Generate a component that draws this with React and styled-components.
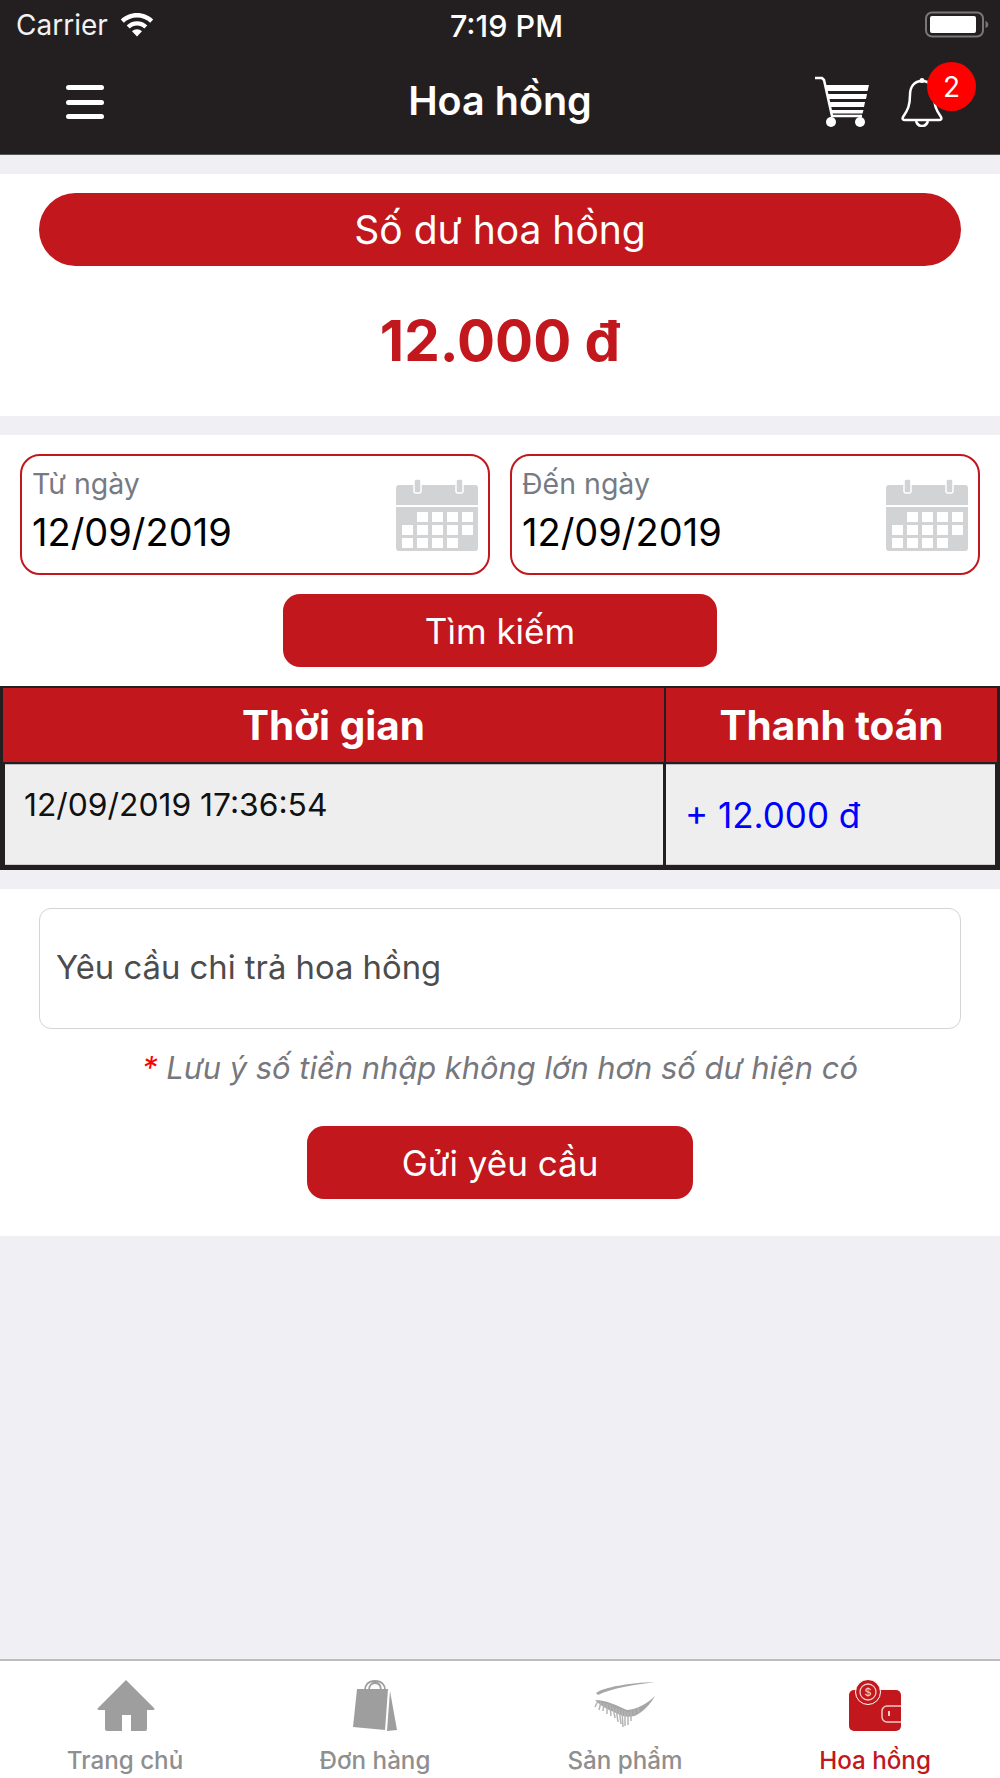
import styled, { createGlobalStyle } from "styled-components";

const RED = "#c1171d";
const DARK = "#231f20";
const PAGE = "#efeff4";

const Global = createGlobalStyle`
  * { box-sizing: border-box; }
  html, body { margin: 0; padding: 0; background: ${PAGE}; }
  body { font-family: Inter, "Noto Sans", "Liberation Sans", sans-serif; }
`;

const Screen = styled.div`
  width: 1000px;
  height: 1778px;
  display: flex;
  flex-direction: column;
  background: ${PAGE};
  overflow: hidden;
`;

const Header = styled.header`
  height: 155px;
  background: ${DARK};
  color: #fff;
  border-bottom: 1px solid #55555a;
`;

const StatusBar = styled.div`
  height: 50px;
  padding: 0 11px 0 16px;
  display: grid;
  grid-template-columns: 1fr auto 1fr;
  align-items: center;
`;

const Carrier = styled.div`
  display: flex;
  align-items: center;
  gap: 12px;
  font-size: 28px;
  color: #f2f2f2;
`;

const Clock = styled.div`
  font-size: 30.500px;
  font-weight: 500;
  margin-left: 8px;
`;

const Battery = styled.div`
  justify-self: end;
  display: flex;
`;

const NavBar = styled.nav`
  height: 104px;
  display: grid;
  grid-template-columns: 1fr auto 1fr;
  align-items: center;
  padding: 0 33px;
`;

const MenuSlot = styled.div`
  display: flex;
  padding-left: 33px;
`;

const Title = styled.h1`
  margin: 0;
  padding-bottom: 2px;
  font-size: 39.500px;
  font-weight: 600;
  text-align: center;
`;

const NavIcons = styled.div`
  justify-self: end;
  display: flex;
  align-items: center;
  gap: 32px;
`;

const BellWrap = styled.div`
  position: relative;
  width: 66px;
  height: 50px;
`;

const Badge = styled.span`
  position: absolute;
  top: -15px;
  right: -9px;
  width: 49px;
  height: 49px;
  border-radius: 50%;
  background: #fe0000;
  color: #fff;
  font-size: 28px;
  display: flex;
  align-items: center;
  justify-content: center;
`;

const Section = styled.section`
  background: #fff;
  margin-top: 19px;
`;

const BalanceSection = styled(Section)`
  height: 242px;
  padding: 19px 39px 0;
`;

const Pill = styled.div`
  height: 73px;
  border-radius: 37px;
  background: ${RED};
  color: #fff;
  font-size: 39px;
  display: flex;
  align-items: center;
  justify-content: center;
`;

const Amount = styled.div`
  margin-top: 40px;
  text-align: center;
  color: ${RED};
  font-size: 56.500px;
  line-height: 70px;
  font-weight: 700;
`;

const SearchSection = styled(Section)`
  padding-top: 19px;
`;

const DateRow = styled.div`
  display: grid;
  grid-template-columns: 1fr 1fr;
  gap: 20px;
  padding: 0 20px;
`;

const DateField = styled.div`
  height: 121px;
  border: 2px solid ${RED};
  border-radius: 20px;
  padding: 10px 10px 0 10px;
  display: flex;
  justify-content: space-between;
`;

const DateLabel = styled.div`
  color: #767a83;
  font-size: 28.500px;
  line-height: 36px;
`;

const DateValue = styled.div`
  margin-top: 8px;
  color: #000;
  font-size: 38px;
  line-height: 45px;
`;

const CalendarSlot = styled.div`
  padding-top: 13px;
`;

const ButtonRow = styled.div`
  display: flex;
  justify-content: center;
`;

const RedButton = styled.button`
  width: ${(p) => p.$w}px;
  height: 73px;
  margin-top: ${(p) => p.$top}px;
  border: none;
  border-radius: 17px;
  background: ${RED};
  color: #fff;
  font-family: inherit;
  font-size: 35px;
`;

const Table = styled.div`
  margin-top: 19px;
  background: ${DARK};
  padding: 2px 0 5px;
`;

const HeadRow = styled.div`
  display: grid;
  grid-template-columns: 661px 1fr;
  gap: 2px;
  padding: 0 3px;
  height: 74px;
`;

const HeadCell = styled.div`
  background: ${RED};
  color: #fff;
  font-size: 40.500px;
  font-weight: 700;
  display: flex;
  align-items: center;
  justify-content: center;
`;

const BodyRow = styled.div`
  display: grid;
  grid-template-columns: 658px 1fr;
  gap: 3px;
  padding: 0 5px;
  margin-top: 2px;
  height: 101px;
`;

const BodyCell = styled.div`
  background: #eee;
  border-top: 1px solid #bbb;
  border-bottom: 1px solid #ccc;
`;

const TimeCell = styled(BodyCell)`
  padding: 22px 0 0 19px;
  font-size: 31.800px;
  line-height: 36px;
  color: #111;
`;

const PayCell = styled(BodyCell)`
  padding: 29px 0 0 19px;
  font-size: 35px;
  line-height: 42px;
  color: #0000ff;
`;

const RequestSection = styled(Section)`
  height: 347px;
  padding: 19px 39px 0;
`;

const RequestInput = styled.div`
  height: 121px;
  border: 1px solid #d4d4d4;
  border-radius: 12px;
  padding: 0 16px 3px;
  display: flex;
  align-items: center;
  color: #4c4c4c;
  font-size: 32.800px;
`;

const Note = styled.div`
  margin-top: 21px;
  text-align: center;
  color: #77777c;
  font-size: 30.900px;
  line-height: 36px;
  font-style: italic;
  span {
    color: #f00;
  }
`;

const TabBar = styled.nav`
  margin-top: auto;
  height: 119px;
  background: #fff;
  border-top: 2px solid #bdbdbd;
  display: grid;
  grid-template-columns: repeat(4, 1fr);
`;

const Tab = styled.div`
  display: flex;
  flex-direction: column;
  align-items: center;
  padding-top: 19px;
  color: ${(p) => (p.$active ? RED : "#8f8f8f")};
  font-size: 24.200px;
  font-weight: 500;
  svg {
    display: block;
  }
`;

const TabLabel = styled.span`
  margin-top: 15px;
  line-height: 30px;
`;

const WifiIcon = () => (
  <svg width="34" height="24" viewBox="0 0 34 24">
    <path fill="#fff" d="M17 0C10.700 0 5 2.500.8 6.500l3 3.200C7.200 6.400 11.900 4.400 17 4.400s9.800 2 13.200 5.300l3-3.200C29 2.500 23.300 0 17 0z" />
    <path fill="#fff" d="M17 8.200c-4 0-7.600 1.600-10.300 4.200l3 3.100c1.900-1.800 4.500-3 7.300-3s5.400 1.200 7.300 3l3-3.100C24.600 9.800 21 8.200 17 8.200z" />
    <path fill="#fff" d="M17 16.300c-2 0-3.700.8-5 2l5 5.200 5-5.200c-1.300-1.200-3-2-5-2z" />
  </svg>
);

const BatteryIcon = () => (
  <svg width="64" height="28" viewBox="0 0 64 28">
    <rect x="1" y="1.500" width="57" height="24" rx="6" fill="none" stroke="#777" strokeWidth="2" />
    <rect x="5" y="5" width="46" height="17" rx="2" fill="#fff" />
    <path d="M60.500 10c1.800.5 2.800 2 2.800 3.500s-1 3-2.800 3.500z" fill="#777" />
  </svg>
);

const MenuIcon = () => (
  <svg width="38" height="34" viewBox="0 0 38 34">
    <rect x="0" y="0" width="38" height="5" rx="2.500" fill="#fff" />
    <rect x="0" y="15" width="38" height="5" rx="2.500" fill="#fff" />
    <rect x="0" y="29" width="38" height="5" rx="2.500" fill="#fff" />
  </svg>
);

const CartIcon = () => (
  <svg width="54" height="52" viewBox="0 0 54 52">
    <path d="M0 2h7l2 2 8 36h30" fill="none" stroke="#fff" strokeWidth="2.500" />
    <path fill="#fff" d="M10 9h44l-1.500 6H11.300zM12 18h40l-1 5H13zM13.500 26h36.500l-1 5H15zM15.500 34h33l-1 3.500H16.300z" />
    <circle cx="16" cy="46" r="5" fill="#fff" />
    <circle cx="45" cy="46" r="5" fill="#fff" />
  </svg>
);

const BellIcon = () => (
  <svg width="42" height="50" viewBox="0 0 42 50">
    <path
      d="M21 4c-8 0-12 6-12 14 0 10-2 15-7 22-1 2 0 3 2 3h34c2 0 3-1 2-3-5-7-7-12-7-22 0-8-4-14-12-14z"
      fill="none"
      stroke="#fff"
      strokeWidth="2.500"
    />
    <circle cx="21" cy="3.500" r="2.500" fill="#fff" />
    <path d="M15 44c1 3 3 5 6 5s5-2 6-5" fill="none" stroke="#fff" strokeWidth="2.500" />
  </svg>
);

const CalendarIcon = () => (
  <svg width="82" height="72" viewBox="0 0 82 72">
    <path fill="#d2d3d5" d="M3 6h76a3 3 0 0 1 3 3v17H0V9a3 3 0 0 1 3-3z" />
    <path fill="#d2d3d5" d="M0 28h82v41a3 3 0 0 1-3 3H3a3 3 0 0 1-3-3z" />
    <rect x="18" y="0" width="7" height="14" rx="2" fill="#d2d3d5" stroke="#fff" strokeWidth="1.500" />
    <rect x="60" y="0" width="7" height="14" rx="2" fill="#d2d3d5" stroke="#fff" strokeWidth="1.500" />
    {[
      [21, 33], [36, 33], [51, 33], [66, 33],
      [6, 46], [21, 46], [36, 46], [51, 46], [66, 46],
      [6, 59], [21, 59], [36, 59], [51, 59],
    ].map(([x, y]) => (
      <rect key={x + "-" + y} x={x} y={y} width="11" height="10" fill="#fff" />
    ))}
  </svg>
);

const HomeIcon = () => (
  <svg width="62" height="51" viewBox="-3 0 62 51">
    <path fill="#9e9e9e" d="M29 0 57 28c1 1 .5 2-1 2h-6v19a2 2 0 0 1-2 2H34V35H25v16H10a2 2 0 0 1-2-2V30H2c-1.500 0-2-1-1-2z" />
  </svg>
);

const BagIcon = () => (
  <svg width="46" height="51" viewBox="0 0 46 51">
    <path fill="none" stroke="#9e9e9e" strokeWidth="1.800" d="M13 10c0-5 3-9 10-9s10 4 10 9M17 10c0-4 2-7 6-7s6 3 6 7" />
    <path fill="#9e9e9e" d="M5 9h31l-3 41L1 47z" />
    <path fill="#9e9e9e" d="M38 11l7 39-10 1z" />
  </svg>
);

// lash tips, drawn from the lid line downwards
const LASHES = [
  [4, 21, 1, 27], [7, 22, 5, 30], [10, 23, 9, 31], [13, 24, 13, 34], [16, 25, 17, 36],
  [19, 27, 21, 38], [22, 28, 24, 42], [25, 29, 27, 44], [28, 30, 29, 47], [31, 31, 31, 46],
  [34, 32, 34, 45], [37, 31, 37, 41], [40, 30, 41, 36], [44, 28, 45, 33],
];

const LashIcon = () => (
  <svg width="62" height="51" viewBox="0 0 62 51">
    <path fill="#a6a6a6" d="M2 13C10 7 35 3 61 2 40 5 18 8 4 15z" />
    <path fill="#a6a6a6" d="M1 20c11 0 23 6 32 10 11-1 21-7 28-14-5 9-13 17-21 20-6 2-12 0-18-3-7-3-14-6-21-13z" />
    {LASHES.map(([x1, y1, x2, y2]) => (
      <line key={x1} x1={x1} y1={y1} x2={x2} y2={y2} stroke="#b4b4b4" strokeWidth="1.500" />
    ))}
  </svg>
);

const WalletIcon = () => (
  <svg width="52" height="51" viewBox="0 0 52 51">
    <rect x="0" y="10" width="52" height="41" rx="5" fill={RED} />
    <circle cx="19" cy="12" r="12.500" fill={RED} stroke="#fff" strokeWidth="1" />
    <circle cx="19" cy="12" r="8" fill="none" stroke="#f3c9ca" strokeWidth="1.300" />
    <text x="19" y="16" textAnchor="middle" fontSize="11" fill="#f3c9ca" fontFamily="Inter, sans-serif">$</text>
    <path d="M52 26H38a5 5 0 0 0-5 5v6a5 5 0 0 0 5 5h14" fill="none" stroke="#f3c9ca" strokeWidth="1.500" />
    <rect x="39" y="31" width="2" height="5" fill="#f3c9ca" />
  </svg>
);

export default function App() {
  return (
    <Screen>
      <Global />
      <Header>
        <StatusBar>
          <Carrier>
            Carrier
            <WifiIcon />
          </Carrier>
          <Clock>7:19 PM</Clock>
          <Battery>
            <BatteryIcon />
          </Battery>
        </StatusBar>
        <NavBar>
          <MenuSlot>
            <MenuIcon />
          </MenuSlot>
          <Title>Hoa hồng</Title>
          <NavIcons>
            <CartIcon />
            <BellWrap>
              <BellIcon />
              <Badge>2</Badge>
            </BellWrap>
          </NavIcons>
        </NavBar>
      </Header>

      <BalanceSection>
        <Pill>Số dư hoa hồng</Pill>
        <Amount>12.000 đ</Amount>
      </BalanceSection>

      <SearchSection>
        <DateRow>
          <DateField>
            <div>
              <DateLabel>Từ ngày</DateLabel>
              <DateValue>12/09/2019</DateValue>
            </div>
            <CalendarSlot>
              <CalendarIcon />
            </CalendarSlot>
          </DateField>
          <DateField>
            <div>
              <DateLabel>Đến ngày</DateLabel>
              <DateValue>12/09/2019</DateValue>
            </div>
            <CalendarSlot>
              <CalendarIcon />
            </CalendarSlot>
          </DateField>
        </DateRow>
        <ButtonRow>
          <RedButton $w={434} $top={19}>Tìm kiếm</RedButton>
        </ButtonRow>
        <Table>
          <HeadRow>
            <HeadCell>Thời gian</HeadCell>
            <HeadCell>Thanh toán</HeadCell>
          </HeadRow>
          <BodyRow>
            <TimeCell>12/09/2019 17:36:54</TimeCell>
            <PayCell>+ 12.000 đ</PayCell>
          </BodyRow>
        </Table>
      </SearchSection>

      <RequestSection>
        <RequestInput>Yêu cầu chi trả hoa hồng</RequestInput>
        <Note>
          <span>*</span> Lưu ý số tiền nhập không lớn hơn số dư hiện có
        </Note>
        <ButtonRow>
          <RedButton $w={386} $top={40}>Gửi yêu cầu</RedButton>
        </ButtonRow>
      </RequestSection>

      <TabBar>
        <Tab>
          <HomeIcon />
          <TabLabel>Trang chủ</TabLabel>
        </Tab>
        <Tab>
          <BagIcon />
          <TabLabel>Đơn hàng</TabLabel>
        </Tab>
        <Tab>
          <LashIcon />
          <TabLabel>Sản phẩm</TabLabel>
        </Tab>
        <Tab $active>
          <WalletIcon />
          <TabLabel>Hoa hồng</TabLabel>
        </Tab>
      </TabBar>
    </Screen>
  );
}
